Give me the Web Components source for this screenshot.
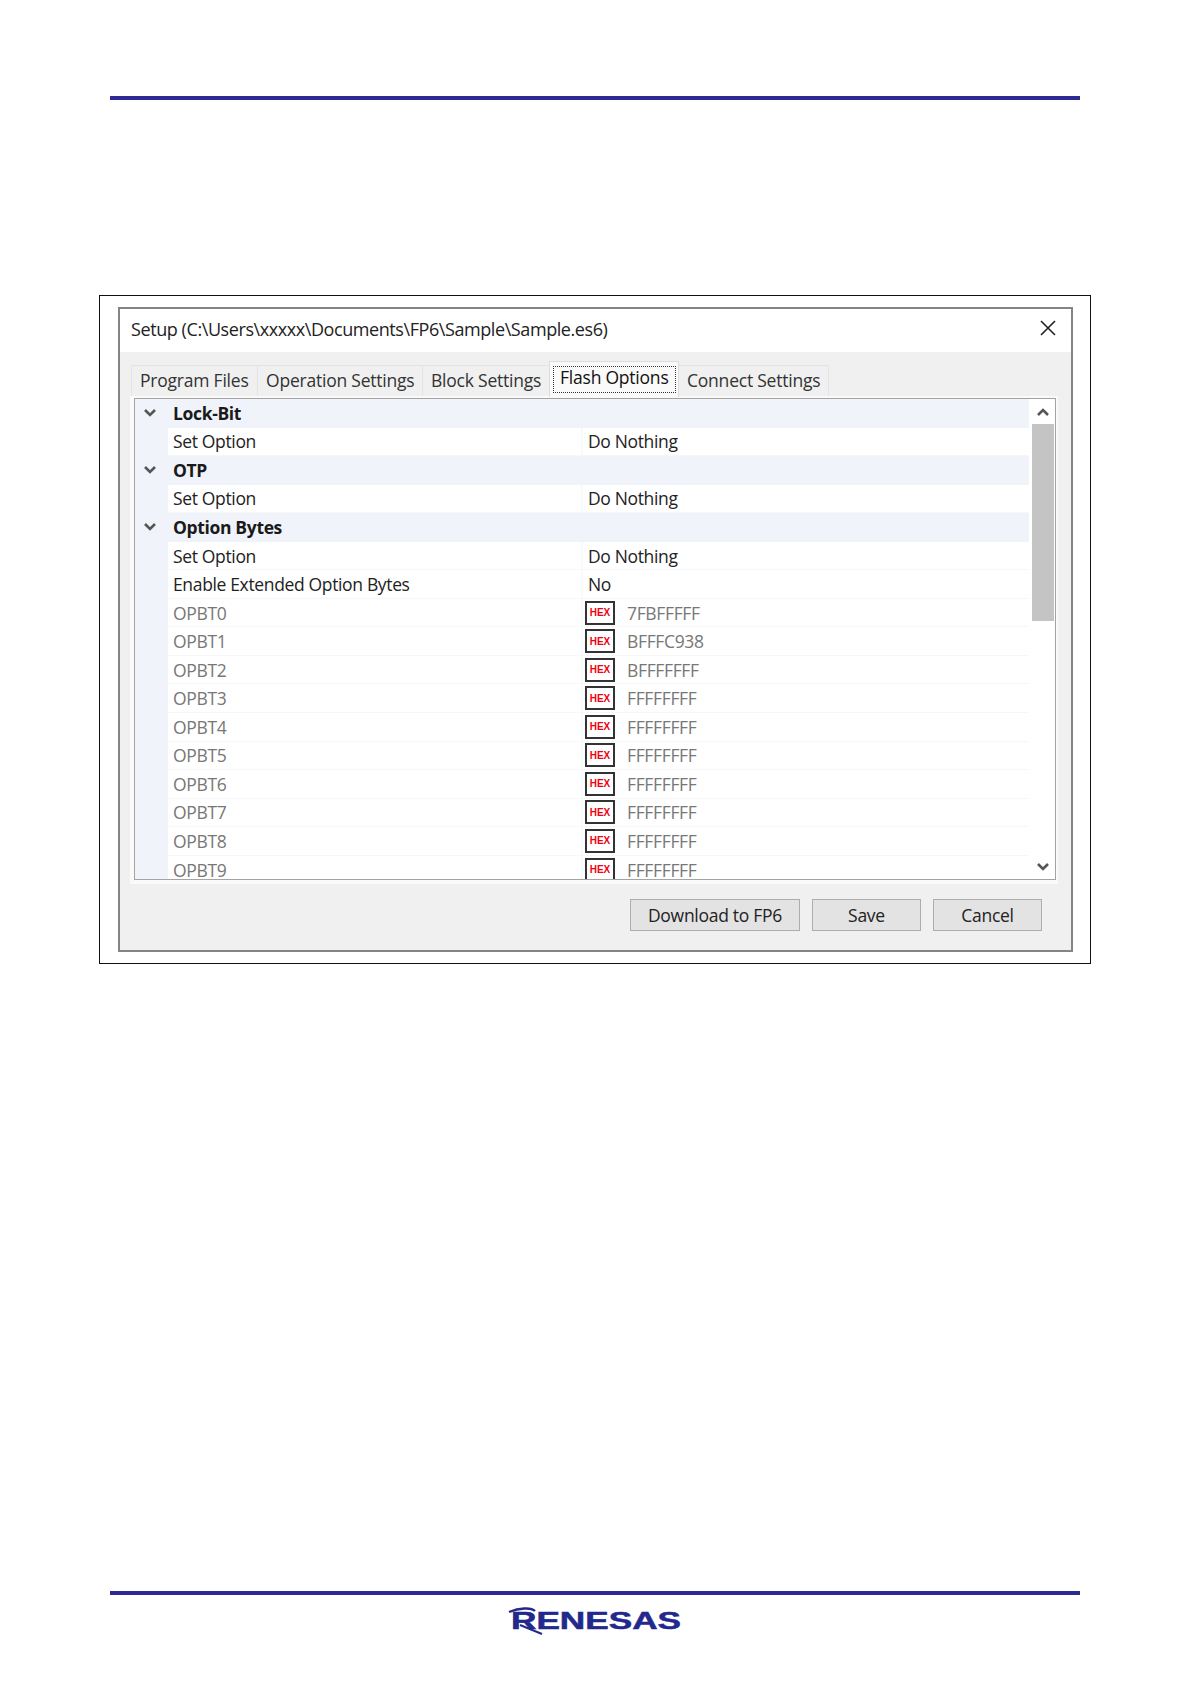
<!doctype html>
<html>
<head>
<meta charset="utf-8">
<title>Setup</title>
<style>
  html, body { margin: 0; padding: 0; background: #fff; }
  body { width: 1191px; height: 1684px; overflow: hidden; font-family: "Open Sans", "Liberation Sans", sans-serif; }
</style>
</head>
<body>
<doc-page>
  <setup-dialog heading="Setup (C:\Users\xxxxx\Documents\FP6\Sample\Sample.es6)">
    <tab-item slot="tabs" style="width:127px">Program Files</tab-item>
    <tab-item slot="tabs" style="width:166px">Operation Settings</tab-item>
    <tab-item slot="tabs" style="width:128px">Block Settings</tab-item>
    <tab-item slot="tabs" style="width:130px" selected>Flash Options</tab-item>
    <tab-item slot="tabs" style="width:151px">Connect Settings</tab-item>

    <prop-row group label="Lock-Bit"></prop-row>
    <prop-row label="Set Option" value="Do Nothing"></prop-row>
    <prop-row group label="OTP"></prop-row>
    <prop-row label="Set Option" value="Do Nothing"></prop-row>
    <prop-row group label="Option Bytes"></prop-row>
    <prop-row label="Set Option" value="Do Nothing"></prop-row>
    <prop-row label="Enable Extended Option Bytes" value="No"></prop-row>
    <prop-row muted label="OPBT0" value="7FBFFFFF"></prop-row>
    <prop-row muted label="OPBT1" value="BFFFC938"></prop-row>
    <prop-row muted label="OPBT2" value="BFFFFFFF"></prop-row>
    <prop-row muted label="OPBT3" value="FFFFFFFF"></prop-row>
    <prop-row muted label="OPBT4" value="FFFFFFFF"></prop-row>
    <prop-row muted label="OPBT5" value="FFFFFFFF"></prop-row>
    <prop-row muted label="OPBT6" value="FFFFFFFF"></prop-row>
    <prop-row muted label="OPBT7" value="FFFFFFFF"></prop-row>
    <prop-row muted label="OPBT8" value="FFFFFFFF"></prop-row>
    <prop-row muted label="OPBT9" value="FFFFFFFF"></prop-row>

    <dlg-button slot="buttons" style="width:170px">Download to FP6</dlg-button>
    <dlg-button slot="buttons" style="width:109px">Save</dlg-button>
    <dlg-button slot="buttons" style="width:109px">Cancel</dlg-button>
  </setup-dialog>
</doc-page>

<script>
class DocPage extends HTMLElement {
  constructor() {
    super();
    this.attachShadow({ mode: 'open' }).innerHTML = `
      <style>
        :host { display: flex; flex-direction: column; align-items: flex-start; width: 1191px; height: 1684px; }
        .rule { width: 970px; height: 4px; margin-left: 110px; background: #2e2a94; flex: none; }
        .top { margin-top: 96px; }
        .figure {
          box-sizing: border-box; width: 992px; height: 669px;
          margin: 195px 0 0 99px; padding: 11px 17px 0 18px;
          border: 1px solid #111; flex: none;
        }
        .bottom { margin-top: 627px; }
        .logo { margin: 12px 0 0 507px; display: block; }
        .logo text { font-family: "Liberation Sans", sans-serif; font-weight: 700; font-size: 23px; fill: #22288c; stroke: #22288c; stroke-width: .5; }
      </style>
      <div class="rule top"></div>
      <div class="figure"><slot></slot></div>
      <div class="rule bottom"></div>
      <svg class="logo" width="178" height="30" viewBox="0 0 178 30">
        <text x="4" y="22" textLength="170" lengthAdjust="spacingAndGlyphs">RENESAS</text>
        <path d="M2 5C12 1 24 0 28 4" fill="none" stroke="#22288c" stroke-width="2.4"/>
        <path d="M13 18L35 27" fill="none" stroke="#22288c" stroke-width="2"/>
      </svg>
    `;
  }
}

class SetupDialog extends HTMLElement {
  constructor() {
    super();
    this.attachShadow({ mode: 'open' }).innerHTML = `
      <style>
        :host {
          display: flex; flex-direction: column; box-sizing: border-box;
          width: 955px; height: 645px;
          border: 2px solid #858585; background: #f0f0f0;
          font-family: "Open Sans", "Liberation Sans", sans-serif; color: #222;
        }
        .title {
          height: 43px; flex: none; background: #fff;
          display: flex; align-items: center; justify-content: space-between;
          padding: 0 14px 3px 11px; box-sizing: border-box;
          font-size: 18px; letter-spacing: -0.42px; white-space: nowrap;
        }
        .close { display: block; margin-top: -3px; }
        .tabs { display: flex; align-items: flex-end; height: 35px; margin: 10px 0 0 11px; flex: none; }
        .panel {
          box-sizing: border-box; height: 488px; margin: -1px 13px 0 10px; flex: none;
          border: solid #fafafa; border-width: 2px 2px 4px 4px;
          background: #fafafa; display: flex;
        }
        .frame {
          flex: 1; display: flex; min-width: 0;
          border: solid #a3a3a3; border-width: 1.5px; background: #fff;
        }
        .list { flex: 1; min-width: 0; overflow: hidden; }
        .scroll { width: 22px; margin-left: 1px; margin-right: 1px; flex: none; display: flex; flex-direction: column; align-items: center; background: #fff; }
        .arrow { height: 25px; display: flex; align-items: center; justify-content: center; flex: none; padding-right: 1px; box-sizing: border-box; }
        .thumb { width: 100%; height: 197px; background: #c4c4c4; flex: none; }
        .track { flex: 1; }
        .foot { flex: 1; display: flex; justify-content: flex-end; gap: 12px; padding: 15px 29px 0 0; }
      </style>
      <div class="title">
        <span>${this.getAttribute('heading')}</span>
        <svg class="close" width="18" height="18" viewBox="0 0 18 18"><path d="M2 2L16 16M16 2L2 16" stroke="#222" stroke-width="1.6" fill="none"/></svg>
      </div>
      <div class="tabs"><slot name="tabs"></slot></div>
      <div class="panel">
        <div class="frame">
          <div class="list"><slot></slot></div>
          <div class="scroll">
            <div class="arrow"><svg width="14" height="10" viewBox="0 0 14 10"><path d="M2 8L7 3L12 8" fill="none" stroke="#555" stroke-width="2.6"/></svg></div>
            <div class="thumb"></div>
            <div class="track"></div>
            <div class="arrow"><svg width="14" height="10" viewBox="0 0 14 10"><path d="M2 2L7 7L12 2" fill="none" stroke="#555" stroke-width="2.6"/></svg></div>
          </div>
        </div>
      </div>
      <div class="foot"><slot name="buttons"></slot></div>
    `;
  }
}

class TabItem extends HTMLElement {
  constructor() {
    super();
    this.attachShadow({ mode: 'open' }).innerHTML = `
      <style>
        :host {
          display: flex; box-sizing: border-box; height: 32px; padding: 0 0 3px 8px; align-items: center;
          border: 1px solid #e4e4e4; border-bottom: 0; margin-right: -1px;
          font-size: 17.5px; letter-spacing: -0.22px; white-space: nowrap; color: #333; background: #f0f0f0;
        }
        :host([selected]) {
          height: 36px; padding: 4px 3px; background: #fafafa; border-color: #dcdcdc; position: relative; z-index: 1; color: #111;
        }
        .focus { display: flex; align-items: center; }
        :host([selected]) .focus {
          flex: 1; height: 100%; box-sizing: border-box; padding: 0 6px 5px;
          border: 1.5px dotted #333;
        }
      </style>
      <span class="focus"><slot></slot></span>
    `;
  }
}

class PropRow extends HTMLElement {
  constructor() {
    super();
    const value = this.getAttribute('value') ?? '';
    const hex = this.hasAttribute('muted');
    this.attachShadow({ mode: 'open' }).innerHTML = `
      <style>
        :host {
          display: flex; height: 28.55px; box-sizing: border-box; background: #f0f4fa;
          font-size: 17.5px; letter-spacing: -0.35px; white-space: nowrap; color: #222; margin-right: 2px;
        }
        .chev { width: 33px; flex: none; display: flex; align-items: center; justify-content: center; padding-right: 4px; box-sizing: border-box; }
        .name, .val { display: flex; align-items: center; background: #fff; border-bottom: 1px solid #f7f7f7; box-sizing: border-box; }
        .name { width: 413px; padding-left: 5px; flex: none; }
        .val { flex: 1; border-left: 2px solid #f8f9fb; padding-left: 5px; }
        :host([group]) { font-weight: 700; color: #1a1a1a; }
        :host([group]) .name, :host([group]) .val { background: transparent; border: 0; }
        :host([muted]) { color: #777; }
        :host([muted]) .val { padding-left: 2px; }
      </style>
      <div class="chev">${this.hasAttribute('group') ? '<svg width="14" height="10" viewBox="0 0 14 10"><path d="M2 2L7 7L12 2" fill="none" stroke="#555" stroke-width="2.6"/></svg>' : ''}</div>
      <div class="name">${this.getAttribute('label')}</div>
      <div class="val">${hex ? '<hex-badge></hex-badge>' : ''}${value}</div>
    `;
  }
}

class HexBadge extends HTMLElement {
  constructor() {
    super();
    this.attachShadow({ mode: 'open' }).innerHTML = `
      <style>
        :host {
          display: flex; align-items: center; justify-content: center; box-sizing: border-box;
          width: 30px; height: 24px; margin-right: 12px; flex: none;
          border: 2px solid #333; background: #fff;
          font: 700 10px "Liberation Sans", sans-serif; letter-spacing: 0; color: #f00012;
        }
      </style>HEX
    `;
  }
}

class DlgButton extends HTMLElement {
  constructor() {
    super();
    this.attachShadow({ mode: 'open' }).innerHTML = `
      <style>
        :host {
          display: flex; align-items: center; justify-content: center; box-sizing: border-box;
          height: 32px; border: 1.5px solid #adadad; background: #e3e3e3;
          font-size: 17.5px; letter-spacing: -0.28px; color: #222; white-space: nowrap;
        }
      </style>
      <slot></slot>
    `;
  }
}

customElements.define('doc-page', DocPage);
customElements.define('setup-dialog', SetupDialog);
customElements.define('tab-item', TabItem);
customElements.define('prop-row', PropRow);
customElements.define('hex-badge', HexBadge);
customElements.define('dlg-button', DlgButton);
</script>
</body>
</html>
